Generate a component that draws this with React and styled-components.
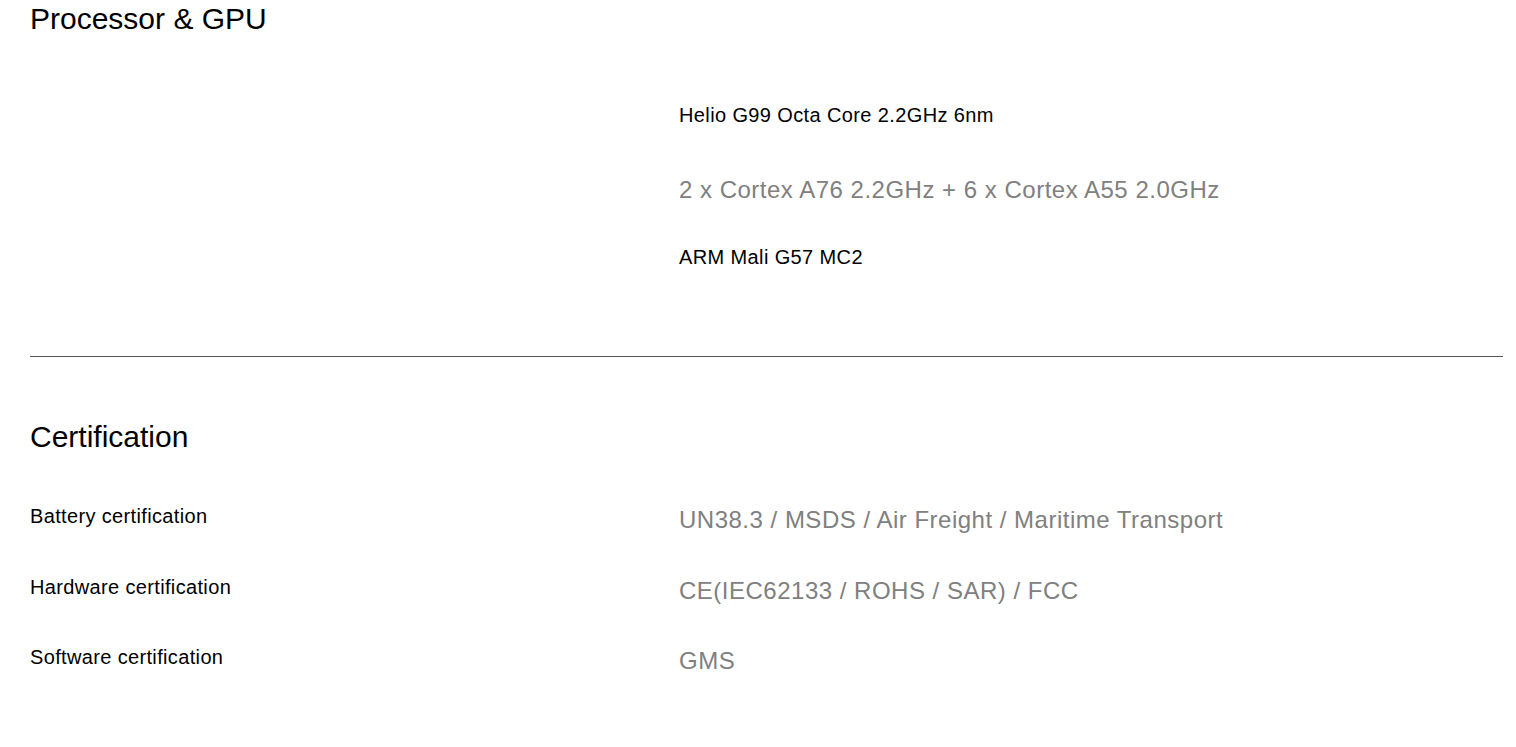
import React from "react";
import styled, { createGlobalStyle } from "styled-components";

const GlobalStyle = createGlobalStyle`
  body {
    margin: 0;
    background: #fff;
    font-family: "Liberation Sans", Arial, sans-serif;
    color: #000;
  }
`;

const Page = styled.div`
  padding: 1px 13px 0 30px;
`;

const Section = styled.section`
  padding-top: ${(p) => p.$top || "0"};
  padding-bottom: ${(p) => p.$bottom || "0"};
`;

const SectionTitle = styled.h2`
  margin: 0 0 ${(p) => p.$gap || "0"};
  font-size: 30px;
  font-weight: 400;
  line-height: 36px;
`;

const Divider = styled.hr`
  margin: 0;
  border: none;
  border-top: 1px solid #555;
`;

const SpecRow = styled.div`
  display: grid;
  grid-template-columns: 649px 1fr;
  align-items: start;
  height: ${(p) => p.$h || "auto"};
`;

const Label = styled.div`
  font-size: 20px;
  line-height: 24px;
  letter-spacing: 0.35px;
`;

const Value = styled.div`
  margin-top: ${(p) => p.$shift || "0"};
  font-size: ${(p) => (p.$muted ? "24px" : "20px")};
  line-height: ${(p) => (p.$muted ? "28px" : "24px")};
  letter-spacing: ${(p) => (p.$muted ? "0.5px" : "0.38px")};
  color: ${(p) => (p.$muted ? "#808080" : "#000")};
`;

const processor = [
  { value: "Helio G99 Octa Core 2.2GHz 6nm", h: "73px" },
  { value: "2 x Cortex A76 2.2GHz + 6 x Cortex A55 2.0GHz", muted: true, h: "69px" },
  { value: "ARM Mali G57 MC2" },
];

const certs = [
  { label: "Battery certification", value: "UN38.3 / MSDS / Air Freight / Maritime Transport" },
  { label: "Hardware certification", value: "CE(IEC62133 / ROHS / SAR) / FCC" },
  { label: "Software certification", value: "GMS" },
];

const App = () => {
  return (
    <Page>
      <GlobalStyle />
      <Section $bottom="87px">
        <SectionTitle $gap="66px">Processor &amp; GPU</SectionTitle>
        {processor.map((r, i) => (
          <SpecRow key={i} $h={r.h}>
            <Label />
            <Value $muted={r.muted}>{r.value}</Value>
          </SpecRow>
        ))}
      </Section>
      <Divider />
      <Section $top="62px">
        <SectionTitle $gap="49px">Certification</SectionTitle>
        {certs.map((r) => (
          <SpecRow key={r.label} $h="70.5px">
            <Label>{r.label}</Label>
            <Value $muted $shift="2px">{r.value}</Value>
          </SpecRow>
        ))}
      </Section>
    </Page>
  );
};

export default App;
